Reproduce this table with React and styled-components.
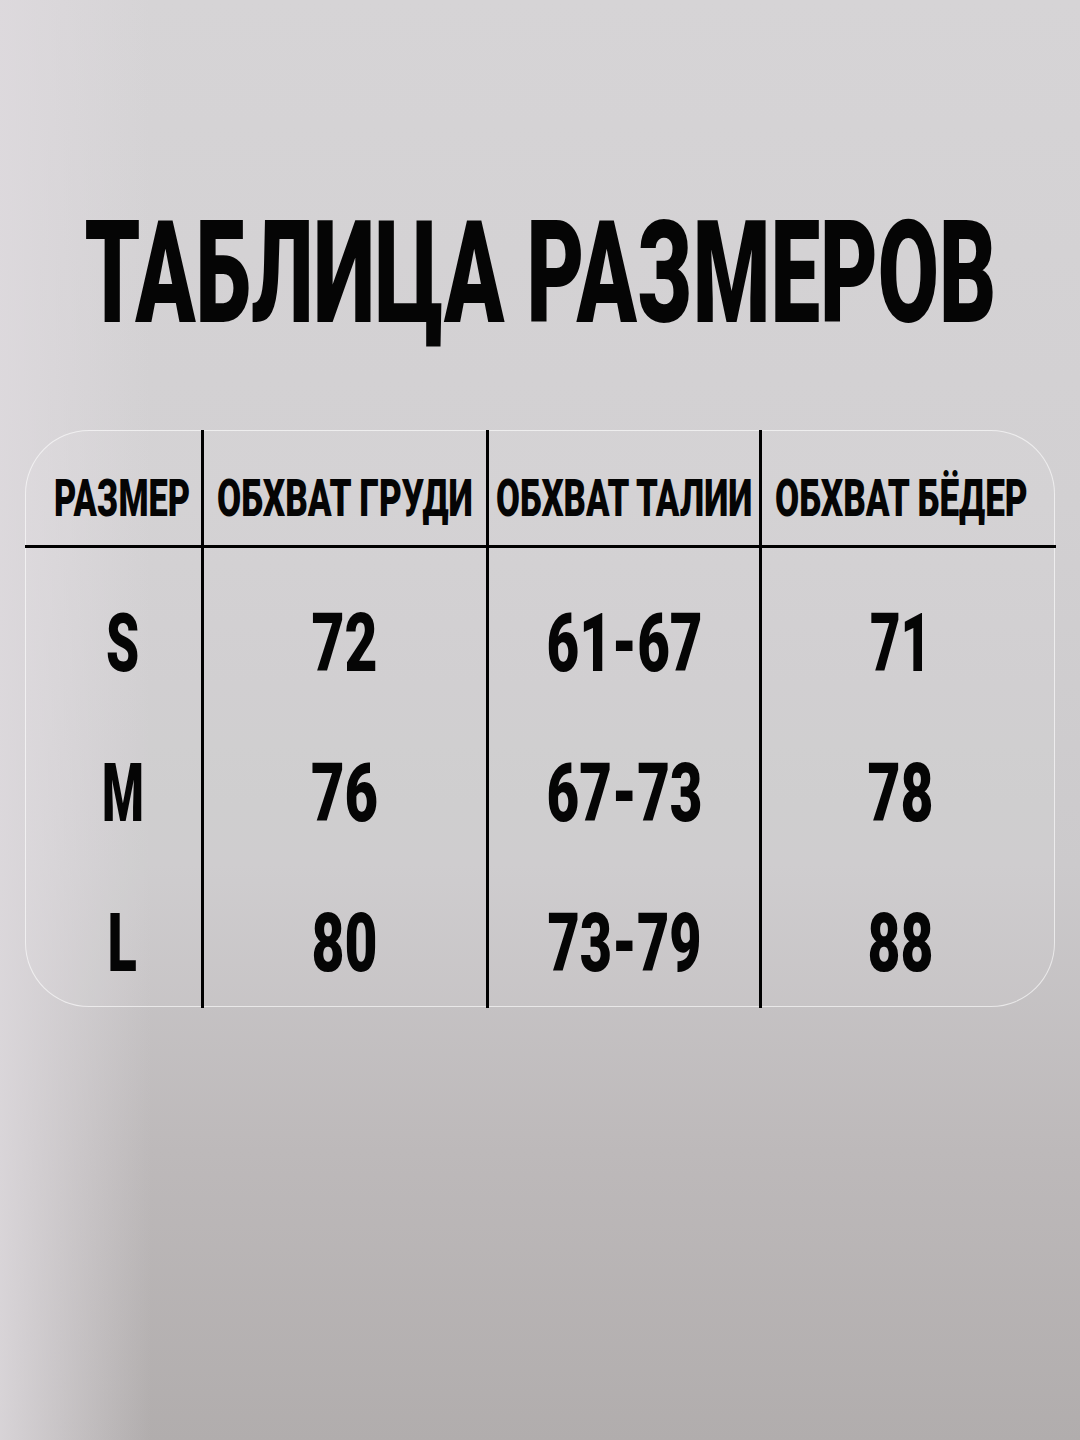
import React, { useLayoutEffect, useRef, useState } from "react";
import styled, { createGlobalStyle } from "styled-components";

const Global = createGlobalStyle`
  html, body { margin: 0; padding: 0; }
  body {
    width: 1080px;
    height: 1440px;
    overflow: hidden;
    font-family: "Roboto", "Liberation Sans", sans-serif;
    background:
      linear-gradient(to right, rgba(222,218,222,0.85) 0%, rgba(222,218,222,0) 14%),
      linear-gradient(to bottom, #d6d4d6 0%, #d2d0d2 35%, #cccacc 60%, #bdb9ba 80%, #b1adad 100%);
  }
`;

const Page = styled.main`
  width: 1080px;
  height: 1440px;
  display: flex;
  flex-direction: column;
  align-items: center;
  color: #050505;
`;

const Title = styled.h1`
  margin: 202px 0 0;
  font-size: 143px;
  line-height: 1;
  font-weight: 900;
  height: 143px;
  display: flex;
  justify-content: center;
  width: 100%;
`;

const Card = styled.section`
  margin-top: 85px;
  width: 1030px;
  height: 577px;
  box-sizing: border-box;
  border: 1.5px solid rgba(255, 255, 255, 0.6);
  border-radius: 64px;
  background: rgba(255, 255, 255, 0.06);
  display: grid;
  grid-template-columns: 175px 285px 273px minmax(0, 1fr);
`;

const Column = styled.div`
  display: grid;
  grid-template-columns: minmax(0, 1fr);
  grid-template-rows: 118px 150px 150px 1fr;
  min-width: 0;
  border-left: ${(p) => (p.$first ? "none" : "3px solid #000")};
  margin-top: -1.5px;
  margin-bottom: -1.5px;
`;

const HeadCell = styled.div`
  min-width: 0;
  border-bottom: 3px solid #000;
  display: flex;
  justify-content: center;
  align-items: flex-start;
  padding-top: 43px;
  box-sizing: border-box;
  font-size: 52px;
  line-height: 1;
  font-weight: 900;
  margin-left: ${(p) => (p.$first ? "-1.5px" : "-3px")};
  margin-right: ${(p) => (p.$last ? "-1.5px" : "0")};
  padding-left: ${(p) => (p.$first ? 1.5 : 3) + (p.$shift > 0 ? p.$shift * 2 : 0)}px;
  padding-right: ${(p) => (p.$last ? 1.5 : 0) + (p.$shift < 0 ? -p.$shift * 2 : 0)}px;
`;

const DataCell = styled.div`
  min-width: 0;
  display: flex;
  justify-content: center;
  align-items: flex-start;
  padding-top: 54px;
  box-sizing: border-box;
  padding-left: ${(p) => (p.$shift > 0 ? p.$shift * 2 : 0)}px;
  padding-right: ${(p) => (p.$shift < 0 ? -p.$shift * 2 : 0)}px;
  font-size: 82px;
  line-height: 1;
  font-weight: 900;
`;

const FitSpan = styled.span`
  display: inline-block;
  flex: none;
  white-space: nowrap;
  transform-origin: center top;
`;

function Fit({ w, children }) {
  const ref = useRef(null);
  const [s, setS] = useState(1);
  useLayoutEffect(() => {
    const el = ref.current;
    const measure = () => {
      if (el && el.offsetWidth) setS(w / el.offsetWidth);
    };
    measure();
    if (document.fonts && document.fonts.ready) document.fonts.ready.then(measure);
  }, [w]);
  return (
    <FitSpan ref={ref} style={{ transform: `scaleX(${s})` }}>
      {children}
    </FitSpan>
  );
}

const columns = [
  { head: "РАЗМЕР", hw: 136, shift: 9, cells: [["S", 33], ["M", 42], ["L", 29]] },
  { head: "ОБХВАТ ГРУДИ", hw: 256, shift: 0, cells: [["72", 66], ["76", 67], ["80", 66]] },
  { head: "ОБХВАТ ТАЛИИ", hw: 256, shift: 0, cells: [["61-67", 156], ["67-73", 156], ["73-79", 154]] },
  { head: "ОБХВАТ БЁДЕР", hw: 253, shift: -7, cells: [["71", 61], ["78", 66], ["88", 66]] },
];

export default function App() {
  return (
    <>
      <Global />
      <Page>
        <Title>
          <Fit w={912}>ТАБЛИЦА РАЗМЕРОВ</Fit>
        </Title>
        <Card>
          {columns.map((c, i) => (
            <Column key={c.head} $first={i === 0}>
              <HeadCell $shift={c.shift} $first={i === 0} $last={i === columns.length - 1}>
                <Fit w={c.hw}>{c.head}</Fit>
              </HeadCell>
              {c.cells.map(([t, w]) => (
                <DataCell key={t} $shift={c.shift}>
                  <Fit w={w}>{t}</Fit>
                </DataCell>
              ))}
            </Column>
          ))}
        </Card>
      </Page>
    </>
  );
}
